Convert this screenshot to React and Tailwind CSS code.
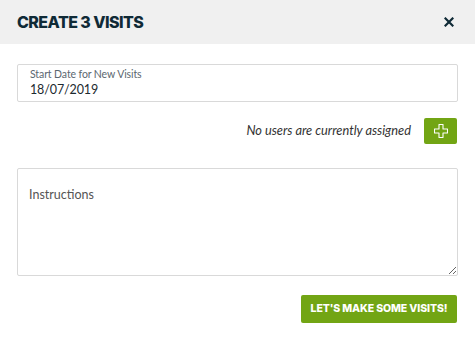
import React from 'react'

const PlusIcon = () => (
  <svg width="14" height="14" viewBox="0 0 14 14" fill="none">
    <path d="M5 0.5h4v4.5h4.5v4H9v4.5H5V9H0.5V5H5z" stroke="white" strokeWidth="1.1" strokeLinejoin="round" />
  </svg>
)

export default function App() {
  return (
    <div className="w-[475px] h-[340px] bg-white" style={{ fontFamily: 'Lato, "Open Sans", sans-serif' }}>
      <div className="h-[44px] bg-[#f0f0f0] flex items-center justify-between pl-[17px] pr-[21px]">
        <h1 className="text-[16px] font-extrabold tracking-[-0.035em] text-[#0f2a36]" style={{ fontFamily: 'Inter, sans-serif' }}>
          CREATE 3 VISITS
        </h1>
        <svg width="10" height="10" viewBox="0 0 10 10">
          <path d="M1.5 1.5l7 7M8.5 1.5l-7 7" stroke="#0f2a36" strokeWidth="2.2" strokeLinecap="square" />
        </svg>
      </div>

      <div className="px-[17px] pt-[20px]">
        <div className="h-[38px] border border-[#d9d9d9] rounded-[2px] px-[12px] pt-[4px] leading-none">
          <div className="text-[10.5px] tracking-[-0.01em] text-[#5b6770]">Start Date for New Visits</div>
          <div className="text-[12.5px] tracking-[-0.01em] text-[#1d2a30] mt-[4px]">18/07/2019</div>
        </div>

        <div className="flex items-center justify-end gap-[13px] mt-[16px] pr-px">
          <span className="italic text-[12.8px] text-[#333]">No users are currently assigned</span>
          <button className="w-[33px] h-[26px] bg-[#72a514] rounded-[2px] flex items-center justify-center">
            <PlusIcon />
          </button>
        </div>

        <textarea
          placeholder="Instructions"
          className="block w-full h-[108px] mt-[24px] border border-[#d9d9d9] rounded-[2px] px-[11px] pt-[17px] text-[12.5px] text-[#333] placeholder:text-[#555] outline-none"
        />

        <div className="flex justify-end mt-[19px] pr-px">
          <button
            className="w-[156px] h-[28px] bg-[#72a514] rounded-[2px] text-white text-[10.5px] font-extrabold tracking-[-0.01em]"
            style={{ fontFamily: 'Inter, sans-serif' }}
          >
            LET'S MAKE SOME VISITS!
          </button>
        </div>
      </div>
    </div>
  )
}
